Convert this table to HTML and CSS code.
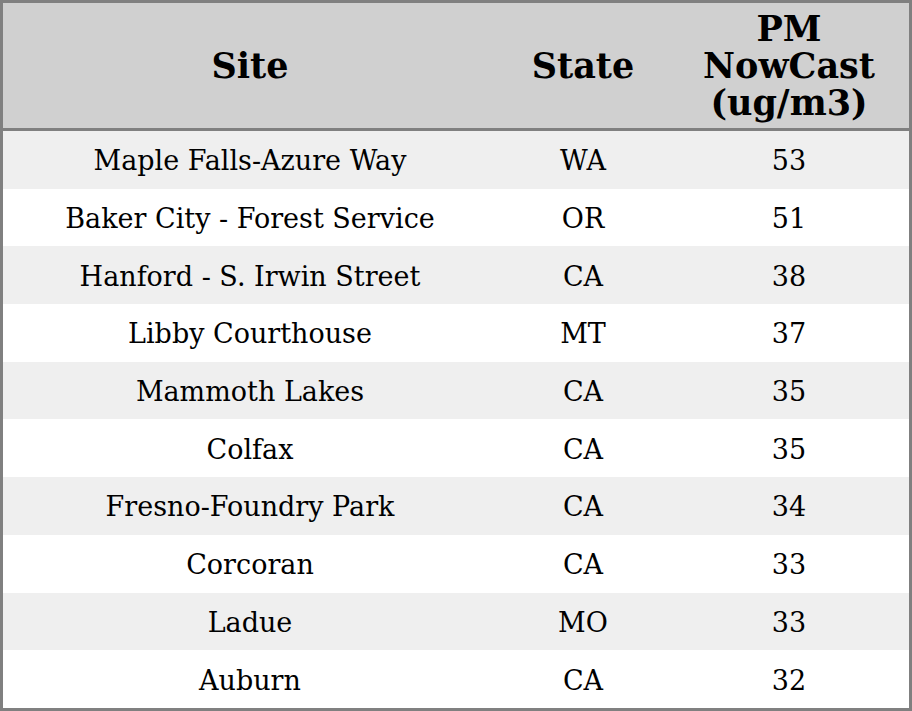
FILE: index.html
```html
<!DOCTYPE html>
<html>
<head>
<meta charset="utf-8">
<link rel="stylesheet" href="styles.css">
</head>
<body>
<table class="aq">
  <thead>
    <tr><th class="c-site">Site</th><th class="c-state">State</th><th class="c-pm">PM<br>NowCast<br>(ug/m3)</th></tr>
  </thead>
  <tbody>
    <tr><td>Maple Falls-Azure Way</td><td>WA</td><td>53</td></tr>
    <tr><td>Baker City - Forest Service</td><td>OR</td><td>51</td></tr>
    <tr><td>Hanford - S. Irwin Street</td><td>CA</td><td>38</td></tr>
    <tr><td>Libby Courthouse</td><td>MT</td><td>37</td></tr>
    <tr><td>Mammoth Lakes</td><td>CA</td><td>35</td></tr>
    <tr><td>Colfax</td><td>CA</td><td>35</td></tr>
    <tr><td>Fresno-Foundry Park</td><td>CA</td><td>34</td></tr>
    <tr><td>Corcoran</td><td>CA</td><td>33</td></tr>
    <tr><td>Ladue</td><td>MO</td><td>33</td></tr>
    <tr><td>Auburn</td><td>CA</td><td>32</td></tr>
  </tbody>
</table>
</body>
</html>
```
FILE: styles.css
```css
html, body {
  margin: 0;
  padding: 0;
  background: #ffffff;
}
.aq {
  width: 912px;
  height: 711px;
  border-collapse: collapse;
  border: 3px solid #808080;
  font-family: "DejaVu Serif", serif;
  color: #000;
  table-layout: fixed;
}
.aq th {
  background: #d0d0d0;
  font-size: 35px;
  font-weight: bold;
  line-height: 37px;
  height: 125px;
  padding: 0;
  text-align: center;
  vertical-align: middle;
  border-bottom: 3px solid #808080;
}
.c-site { width: 494px; }
.c-state { width: 172px; }
.c-pm { width: 240px; }
.aq td {
  font-size: 27px;
  height: 55.7px;
  padding: 2px 0 0 0;
  text-align: center;
  vertical-align: middle;
}
.aq tbody tr:nth-child(odd) td {
  background: #efefef;
}
```
